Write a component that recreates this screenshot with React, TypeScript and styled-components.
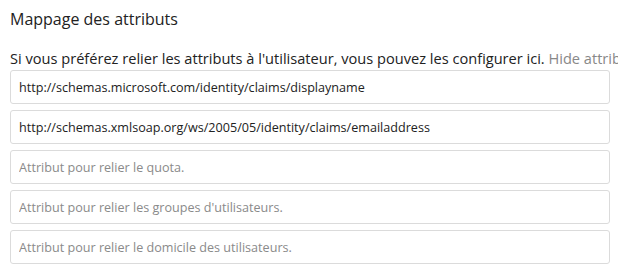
import * as React from 'react';
import styled, { createGlobalStyle } from 'styled-components';

const GlobalStyle = createGlobalStyle`
  body {
    margin: 0;
    background: #fff;
    font-family: 'Open Sans', 'Noto Sans', sans-serif;
    color: #222;
    overflow: hidden;
  }
`;

const Section = styled.section`
  padding: 4px 10px 10px;
  width: 600px;
`;

const Title = styled.h2`
  margin: 0 0 13px;
  font-size: 16px;
  font-weight: 400;
  line-height: 30px;
  color: #222;
`;

const Hint = styled.p`
  margin: 0 0 1px;
  font-size: 14.6px;
  line-height: 22px;
  white-space: nowrap;
  color: #222;
`;

const ToggleLink = styled.a`
  color: #888;
  cursor: pointer;
`;

const Fields = styled.div`
  display: flex;
  flex-direction: column;
  gap: 6px;
`;

const Field = styled.input`
  box-sizing: border-box;
  width: 100%;
  height: 34px;
  margin: 0;
  padding: 0 8px;
  border: 1px solid #dbdbdb;
  border-radius: 3px;
  background: #fff;
  font-family: inherit;
  font-size: 12.6px;
  color: #222;
  outline: none;

  &::placeholder {
    color: #8a8a8a;
    opacity: 1;
  }
`;

const FIELDS = [
  { value: 'http://schemas.microsoft.com/identity/claims/displayname', placeholder: '' },
  { value: 'http://schemas.xmlsoap.org/ws/2005/05/identity/claims/emailaddress', placeholder: '' },
  { value: '', placeholder: 'Attribut pour relier le quota.' },
  { value: '', placeholder: "Attribut pour relier les groupes d'utilisateurs." },
  { value: '', placeholder: 'Attribut pour relier le domicile des utilisateurs.' },
];

export default function App() {
  return (
    <>
      <GlobalStyle />
      <Section>
        <Title>Mappage des attributs</Title>
        <Hint>
          Si vous préférez relier les attributs à l'utilisateur, vous pouvez les configurer ici.{' '}
          <ToggleLink>Hide attribute mapping</ToggleLink>
        </Hint>
        <Fields>
          {FIELDS.map((f, i) => (
            <Field key={i} type="text" defaultValue={f.value} placeholder={f.placeholder} />
          ))}
        </Fields>
      </Section>
    </>
  );
}
